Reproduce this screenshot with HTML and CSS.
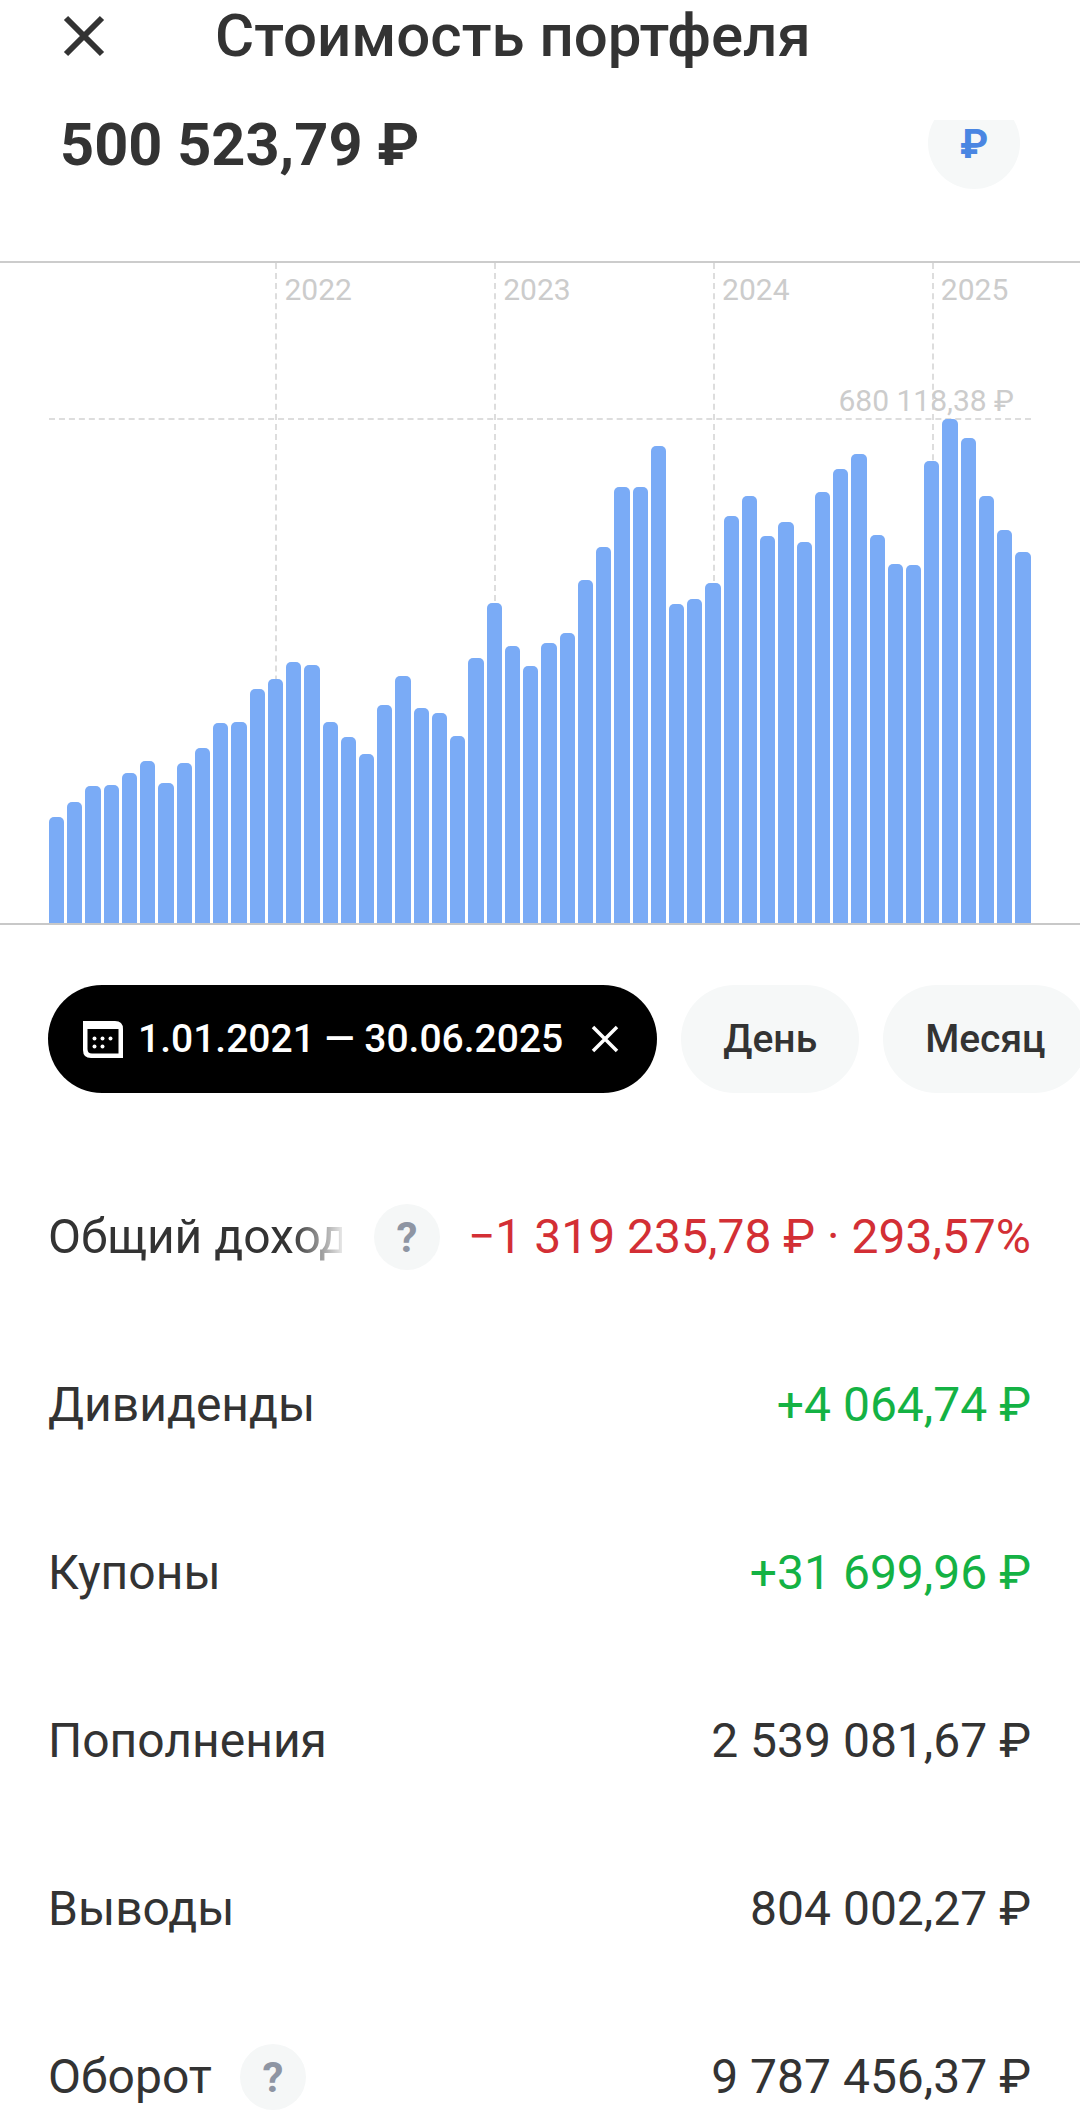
FILE: index.html
```html
<!DOCTYPE html>
<html lang="ru">
<head>
    <meta charset="UTF-8">
    <meta name="viewport" content="width=device-width, initial-scale=1.0">
    <title>Стоимость портфеля</title>
    <link rel="stylesheet" href="styles.css">
</head>
<body>
    <div class="page">
        <header class="top-bar">
            <svg class="close-icon" viewBox="0 0 42 42"><path d="M3 3 L39 39 M39 3 L3 39"/></svg>
            <h1 class="top-title">Стоимость портфеля</h1>
        </header>

        <section class="balance">
            <div class="balance-sum">500 523,79 ₽</div>
            <div class="currency-btn">₽</div>
        </section>

        <section class="chart">
            <div class="peak-line"></div>
            <div class="peak-label">680 118,38 ₽</div>
            <div class="bars">
                <div class="col"><div class="bar" style="height:106px"></div></div>
                <div class="col"><div class="bar" style="height:121px"></div></div>
                <div class="col"><div class="bar" style="height:137px"></div></div>
                <div class="col"><div class="bar" style="height:138px"></div></div>
                <div class="col"><div class="bar" style="height:150px"></div></div>
                <div class="col"><div class="bar" style="height:162px"></div></div>
                <div class="col"><div class="bar" style="height:140px"></div></div>
                <div class="col"><div class="bar" style="height:160px"></div></div>
                <div class="col"><div class="bar" style="height:175px"></div></div>
                <div class="col"><div class="bar" style="height:200px"></div></div>
                <div class="col"><div class="bar" style="height:201px"></div></div>
                <div class="col"><div class="bar" style="height:234px"></div></div>
                <div class="col year"><span class="year-label">2022</span><div class="bar" style="height:244px"></div></div>
                <div class="col"><div class="bar" style="height:261px"></div></div>
                <div class="col"><div class="bar" style="height:258px"></div></div>
                <div class="col"><div class="bar" style="height:201px"></div></div>
                <div class="col"><div class="bar" style="height:186px"></div></div>
                <div class="col"><div class="bar" style="height:169px"></div></div>
                <div class="col"><div class="bar" style="height:218px"></div></div>
                <div class="col"><div class="bar" style="height:247px"></div></div>
                <div class="col"><div class="bar" style="height:215px"></div></div>
                <div class="col"><div class="bar" style="height:210px"></div></div>
                <div class="col"><div class="bar" style="height:187px"></div></div>
                <div class="col"><div class="bar" style="height:265px"></div></div>
                <div class="col year"><span class="year-label">2023</span><div class="bar" style="height:320px"></div></div>
                <div class="col"><div class="bar" style="height:277px"></div></div>
                <div class="col"><div class="bar" style="height:257px"></div></div>
                <div class="col"><div class="bar" style="height:280px"></div></div>
                <div class="col"><div class="bar" style="height:290px"></div></div>
                <div class="col"><div class="bar" style="height:343px"></div></div>
                <div class="col"><div class="bar" style="height:376px"></div></div>
                <div class="col"><div class="bar" style="height:436px"></div></div>
                <div class="col"><div class="bar" style="height:436px"></div></div>
                <div class="col"><div class="bar" style="height:477px"></div></div>
                <div class="col"><div class="bar" style="height:319px"></div></div>
                <div class="col"><div class="bar" style="height:324px"></div></div>
                <div class="col year"><span class="year-label">2024</span><div class="bar" style="height:340px"></div></div>
                <div class="col"><div class="bar" style="height:407px"></div></div>
                <div class="col"><div class="bar" style="height:427px"></div></div>
                <div class="col"><div class="bar" style="height:387px"></div></div>
                <div class="col"><div class="bar" style="height:401px"></div></div>
                <div class="col"><div class="bar" style="height:381px"></div></div>
                <div class="col"><div class="bar" style="height:431px"></div></div>
                <div class="col"><div class="bar" style="height:454px"></div></div>
                <div class="col"><div class="bar" style="height:469px"></div></div>
                <div class="col"><div class="bar" style="height:388px"></div></div>
                <div class="col"><div class="bar" style="height:359px"></div></div>
                <div class="col"><div class="bar" style="height:358px"></div></div>
                <div class="col year"><span class="year-label">2025</span><div class="bar" style="height:462px"></div></div>
                <div class="col"><div class="bar" style="height:504px"></div></div>
                <div class="col"><div class="bar" style="height:485px"></div></div>
                <div class="col"><div class="bar" style="height:427px"></div></div>
                <div class="col"><div class="bar" style="height:393px"></div></div>
                <div class="col"><div class="bar" style="height:371px"></div></div>
            </div>
        </section>

        <section class="chips">
            <div class="chip chip-active">
                <svg class="calendar-icon" viewBox="0 0 40 37">
                    <path fill-rule="evenodd" d="M0 0 H32 Q40 0 40 8 V37 H8 Q0 37 0 29 Z M4.5 8 V28 Q4.5 32.5 9 32.5 H35.5 V8 Z"/>
                    <circle cx="11.5" cy="17.5" r="2"/>
                    <circle cx="19.5" cy="17.5" r="2"/>
                    <circle cx="27.5" cy="17.5" r="2"/>
                    <circle cx="11.5" cy="25.5" r="2"/>
                    <circle cx="19.5" cy="25.5" r="2"/>
                </svg>
                <span>1.01.2021 — 30.06.2025</span>
                <svg class="chip-close" viewBox="0 0 28 28"><path d="M2 2 L26 26 M26 2 L2 26"/></svg>
            </div>
            <div class="chip">День</div>
            <div class="chip">Месяц</div>
        </section>

        <section class="stats">
            <div class="stat-row">
                <div class="stat-label stat-label-cut">Общий доход</div>
                <div class="help-btn">?</div>
                <div class="stat-value negative">−1 319 235,78 ₽ · 293,57%</div>
            </div>
            <div class="stat-row">
                <div class="stat-label">Дивиденды</div>
                <div class="stat-value positive">+4 064,74 ₽</div>
            </div>
            <div class="stat-row">
                <div class="stat-label">Купоны</div>
                <div class="stat-value positive">+31 699,96 ₽</div>
            </div>
            <div class="stat-row">
                <div class="stat-label">Пополнения</div>
                <div class="stat-value">2 539 081,67 ₽</div>
            </div>
            <div class="stat-row">
                <div class="stat-label">Выводы</div>
                <div class="stat-value">804 002,27 ₽</div>
            </div>
            <div class="stat-row">
                <div class="stat-label">Оборот</div>
                <div class="help-btn">?</div>
                <div class="stat-value">9 787 456,37 ₽</div>
            </div>
        </section>
    </div>
</body>
</html>
```

FILE: styles.css
```css
body {
    margin: 0;
    background: #ffffff;
    font-family: Roboto, sans-serif;
    color: #333333;
}
.page {
    width: 1080px;
    height: 2122px;
    overflow: hidden;
}

/* header, white so it covers the top of the currency button */
.top-bar {
    position: relative;
    z-index: 1;
    display: flex;
    align-items: center;
    height: 72px;
    padding: 0 0 48px 63px;
    background: #ffffff;
}
.close-icon {
    width: 42px;
    height: 42px;
    flex: none;
    fill: none;
    stroke: #333333;
    stroke-width: 6;
}
.top-title {
    margin: 0 0 0 110px;
    font-size: 60px;
    font-weight: 500;
    line-height: 72px;
    white-space: nowrap;
}

/* balance */
.balance {
    display: flex;
    justify-content: space-between;
    height: 141px;
    padding: 0 60px;
}
.balance-sum {
    font-size: 59.5px;
    font-weight: 700;
    line-height: 50px;
}
.currency-btn {
    display: flex;
    justify-content: center;
    align-items: center;
    width: 92px;
    height: 92px;
    margin-top: -23px;
    padding-top: 3px;
    box-sizing: border-box;
    border-radius: 50%;
    background: #f6f8f8;
    color: #4a86e2;
    font-size: 40px;
    font-weight: 700;
}

/* chart */
.chart {
    position: relative;
    height: 660px;
    padding: 0 49px;
    border-top: 2px solid #cccccc;
    border-bottom: 2px solid #c8c8c8;
}
.bars {
    display: flex;
    gap: 3px;
    height: 100%;
}
.col {
    position: relative;
    display: flex;
    flex: 1;
    align-items: flex-end;
}
.year::before {
    content: "";
    position: absolute;
    top: 0;
    bottom: 0;
    left: 50%;
    border-left: 2px dashed #dddddd;
}
.year-label {
    position: absolute;
    top: 9px;
    left: calc(50% + 9px);
    color: #cccccc;
    font-size: 30px;
    line-height: 35px;
}
.bar {
    position: relative;
    width: 100%;
    background: #7aabf6;
    border-radius: 5px 5px 0 0;
}
.peak-line {
    position: absolute;
    top: 155px;
    left: 49px;
    right: 49px;
    border-top: 2px dashed #dddddd;
}
.peak-label {
    position: absolute;
    top: 120px;
    right: 66px;
    color: #cccccc;
    font-size: 30px;
    line-height: 35px;
    z-index: 1;
}

/* period chips */
.chips {
    display: flex;
    gap: 24px;
    margin-top: 60px;
    padding-left: 48px;
    overflow: hidden;
}
.chip {
    display: flex;
    flex: none;
    align-items: center;
    height: 108px;
    padding: 0 42px;
    border-radius: 54px;
    background: #f6f8f8;
    font-size: 39px;
    font-weight: 500;
}
.chip-active {
    padding: 0 38px 0 35px;
    background: #000000;
    color: #ffffff;
}
.calendar-icon {
    width: 40px;
    height: 37px;
    margin-right: 15px;
    fill: #ffffff;
}
.chip-close {
    width: 28px;
    height: 28px;
    margin-left: 28px;
    fill: none;
    stroke: #ffffff;
    stroke-width: 3.5;
}

/* rows */
.stats {
    margin-top: 60px;
    padding: 0 49px 0 48px;
}
.stat-row {
    display: flex;
    align-items: center;
    height: 168px;
    font-size: 48px;
}
.stat-label {
    margin-bottom: 2px;
    white-space: nowrap;
}
.stat-label-cut {
    width: 294px;
    margin-right: 4px;
    overflow: hidden;
    -webkit-mask-image: linear-gradient(to right, #000 calc(100% - 50px), rgba(0, 0, 0, 0.12));
    mask-image: linear-gradient(to right, #000 calc(100% - 50px), rgba(0, 0, 0, 0.12));
}
.help-btn {
    display: flex;
    flex: none;
    justify-content: center;
    align-items: center;
    width: 66px;
    height: 66px;
    margin-left: 28px;
    border-radius: 50%;
    background: #f5f7f7;
    color: #8e95a3;
    font-size: 42px;
    font-weight: 700;
}
.stat-value {
    margin-bottom: 2px;
    margin-left: auto;
    white-space: nowrap;
}
.negative {
    color: #d32f35;
}
.positive {
    color: #14b244;
}
```
